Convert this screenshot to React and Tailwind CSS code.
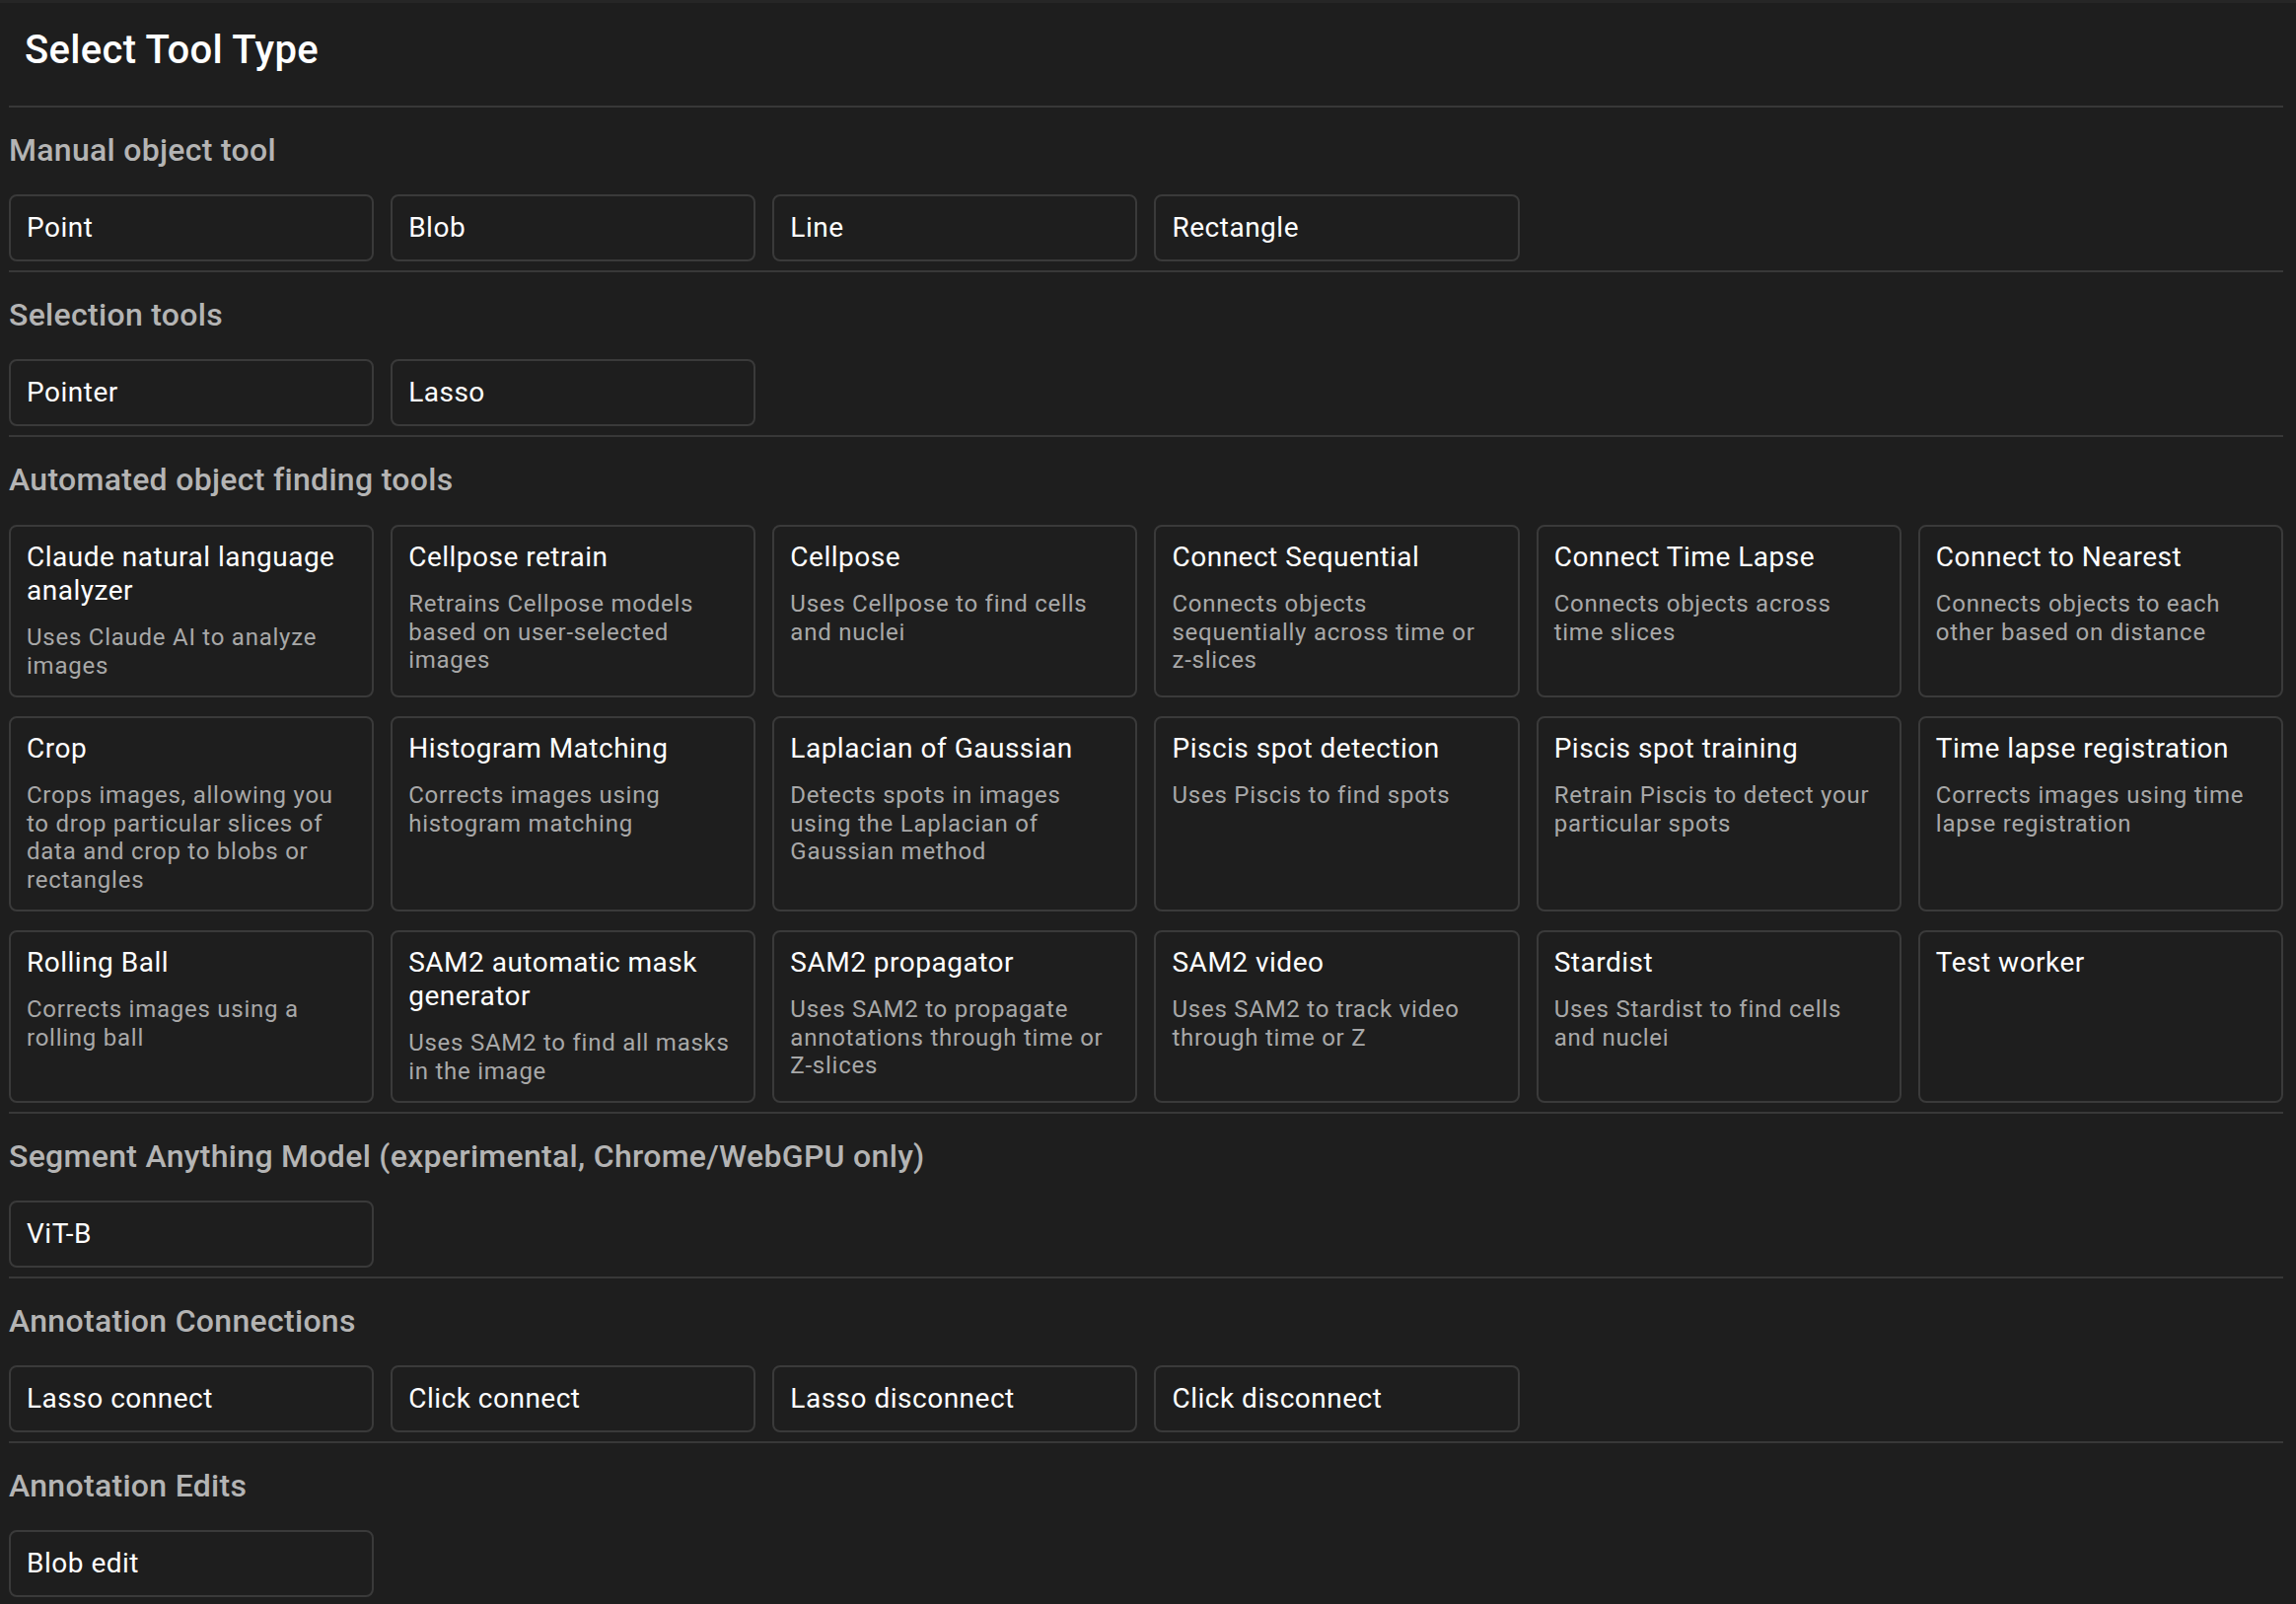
import React from "react";

const sections = [
  {
    title: "Manual object tool",
    items: [{ t: "Point" }, { t: "Blob" }, { t: "Line" }, { t: "Rectangle" }],
  },
  {
    title: "Selection tools",
    items: [{ t: "Pointer" }, { t: "Lasso" }],
  },
  {
    title: "Automated object finding tools",
    rich: true,
    items: [
      { t: "Claude natural language analyzer", d: "Uses Claude AI to analyze images" },
      { t: "Cellpose retrain", d: "Retrains Cellpose models based on user-selected images" },
      { t: "Cellpose", d: "Uses Cellpose to find cells and nuclei" },
      { t: "Connect Sequential", d: "Connects objects sequentially across time or", nb: "z-slices" },
      { t: "Connect Time Lapse", d: "Connects objects across time slices" },
      { t: "Connect to Nearest", d: "Connects objects to each other based on distance" },
      { t: "Crop", d: "Crops images, allowing you to drop particular slices of data and crop to blobs or rectangles" },
      { t: "Histogram Matching", d: "Corrects images using histogram matching" },
      { t: "Laplacian of Gaussian", d: "Detects spots in images using the Laplacian of Gaussian method" },
      { t: "Piscis spot detection", d: "Uses Piscis to find spots" },
      { t: "Piscis spot training", d: "Retrain Piscis to detect your particular spots" },
      { t: "Time lapse registration", d: "Corrects images using time lapse registration" },
      { t: "Rolling Ball", d: "Corrects images using a rolling ball" },
      { t: "SAM2 automatic mask generator", d: "Uses SAM2 to find all masks in the image" },
      { t: "SAM2 propagator", d: "Uses SAM2 to propagate annotations through time or", nb: "Z-slices" },
      { t: "SAM2 video", d: "Uses SAM2 to track video through time or Z" },
      { t: "Stardist", d: "Uses Stardist to find cells and nuclei" },
      { t: "Test worker" },
    ],
  },
  {
    title: "Segment Anything Model (experimental, Chrome/WebGPU only)",
    items: [{ t: "ViT-B" }],
  },
  {
    title: "Annotation Connections",
    items: [
      { t: "Lasso connect" },
      { t: "Click connect" },
      { t: "Lasso disconnect" },
      { t: "Click disconnect" },
    ],
  },
  {
    title: "Annotation Edits",
    items: [{ t: "Blob edit" }],
  },
];

function SimpleCard({ t }) {
  return (
    <div className="h-[68px] flex items-center rounded-[8px] border-2 border-[#3a3a3a] bg-[#1e1e1e] px-[16px]">
      <span className="text-[28px] leading-[34px] text-white tracking-[0.5px]">{t}</span>
    </div>
  );
}

function RichCard({ t, d, nb }) {
  return (
    <div className="rounded-[8px] border-2 border-[#3a3a3a] bg-[#1e1e1e] pl-[16px] pr-[14px] pt-[14px] pb-[16px]">
      <div className="text-[28px] leading-[34px] text-white tracking-[0.5px]">{t}</div>
      {d && (
        <div className="mt-[16px] text-[24px] leading-[28.5px] text-[#a8a8a8] tracking-[0.75px]">
          {d}
          {nb && (
            <>
              {" "}
              <span className="whitespace-nowrap">{nb}</span>
            </>
          )}
        </div>
      )}
    </div>
  );
}

export default function App() {
  return (
    <div
      className="min-h-[1626px] w-full bg-[#1e1e1e] overflow-hidden"
      style={{ fontFamily: "Roboto, 'Liberation Sans', sans-serif" }}
    >
      <div className="h-[3px] w-full overflow-hidden bg-[#262626]">
        <div className="mt-[-24px] pl-[18px] text-[28px] leading-[28px] text-[#4a78b0] whitespace-nowrap tracking-[1px]">
          ANNOTATIONS  TOOLS  PROPERTIES  LAYERS
        </div>
      </div>
      <div className="pl-[9px] pr-[13px]">
        <div className="mt-[24px] pl-[16px] h-[48px] text-[40px] leading-[48px] font-medium text-white tracking-[0.3px]">
          Select Tool Type
        </div>
        <div className="mt-[32px] h-[2px] bg-[#383838]" />
        {sections.map((s) => (
          <div key={s.title}>
            <div className="pt-[19px] h-[67px] text-[32px] leading-[48px] font-medium text-[#b4b4b4] tracking-[0.3px] whitespace-nowrap">
              {s.title}
            </div>
            <div
              className={
                s.rich
                  ? "mt-[22px] grid grid-cols-6 gap-x-[17px] gap-y-[19px]"
                  : "mt-[21px] grid grid-cols-6 gap-x-[17px] gap-y-[18px]"
              }
            >
              {s.items.map((it) =>
                s.rich ? <RichCard key={it.t} {...it} /> : <SimpleCard key={it.t} {...it} />
              )}
            </div>
            <div className="mt-[9px] h-[2px] bg-[#383838]" />
          </div>
        ))}
      </div>
    </div>
  );
}
